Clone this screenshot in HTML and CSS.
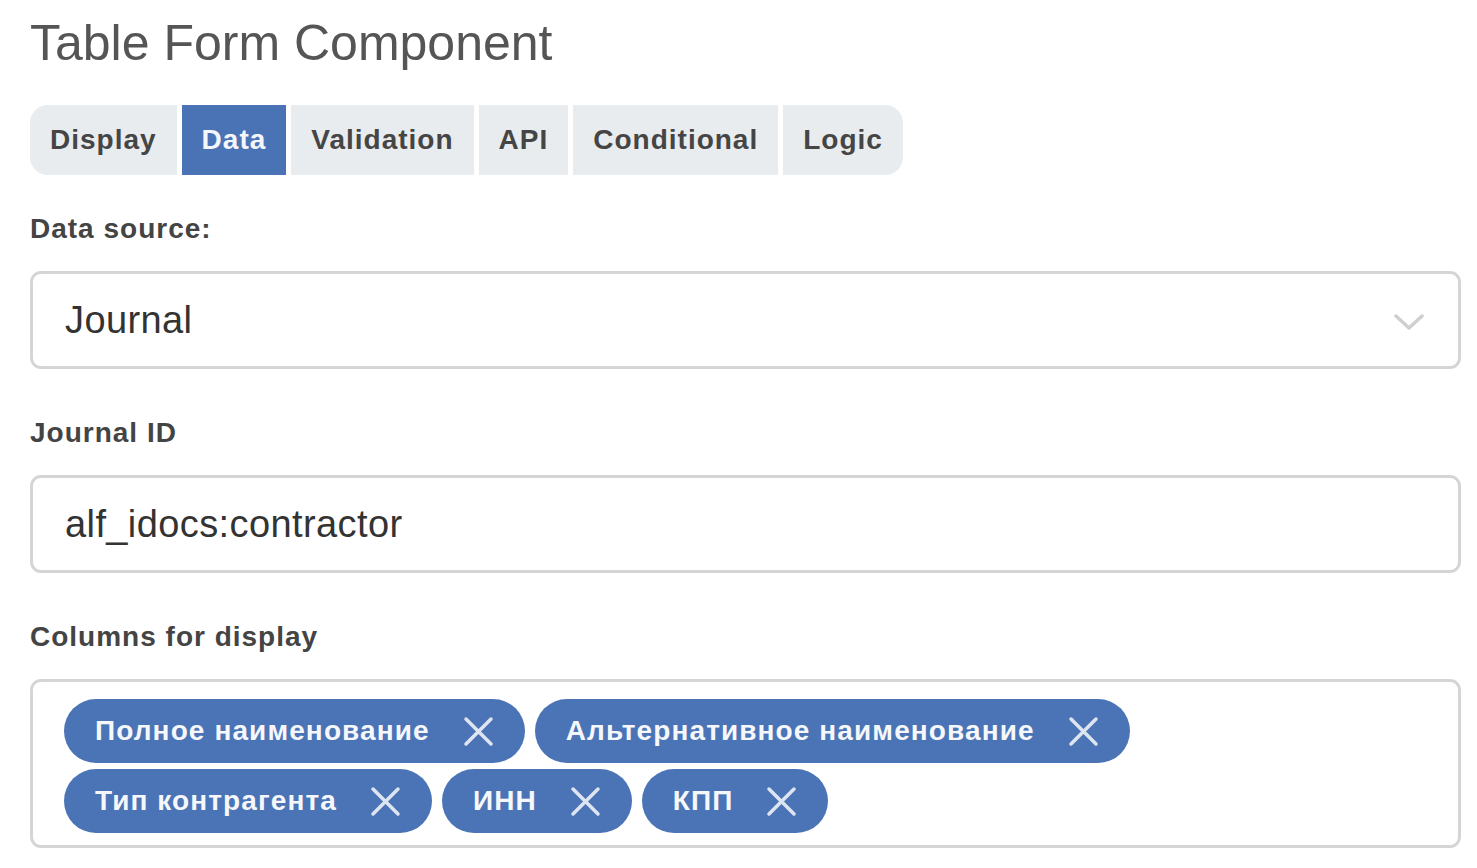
FILE: index.html
```html
<!DOCTYPE html>
<html>
<head>
<meta charset="utf-8">
<link rel="stylesheet" href="styles.css">
</head>
<body>
<div class="page">
  <h1 class="title">Table Form Component</h1>
  <div class="tabs">
    <div class="tab first">Display</div>
    <div class="tab active">Data</div>
    <div class="tab">Validation</div>
    <div class="tab">API</div>
    <div class="tab">Conditional</div>
    <div class="tab last">Logic</div>
  </div>

  <div class="field">
    <div class="label first-label">Data source:</div>
    <div class="control select">
      <span class="value">Journal</span>
      <svg class="chevron" width="30" height="18" viewBox="0 0 30 18"><path d="M2 3 L15 15 L28 3" fill="none" stroke="#cfcfcf" stroke-width="3.5" stroke-linecap="round" stroke-linejoin="round"/></svg>
    </div>
  </div>

  <div class="field">
    <div class="label">Journal ID</div>
    <div class="control">
      <span class="value">alf_idocs:contractor</span>
    </div>
  </div>

  <div class="field">
    <div class="label">Columns for display</div>
    <div class="tagbox">
      <div class="tag"><span>Полное наименование</span><svg class="x" width="31" height="31" viewBox="0 0 31 31"><path d="M3 3 L28 28 M28 3 L3 28" stroke="#dfe5f0" stroke-width="3.5" stroke-linecap="round"/></svg></div>
      <div class="tag"><span>Альтернативное наименование</span><svg class="x" width="31" height="31" viewBox="0 0 31 31"><path d="M3 3 L28 28 M28 3 L3 28" stroke="#dfe5f0" stroke-width="3.5" stroke-linecap="round"/></svg></div>
      <div class="tag"><span>Тип контрагента</span><svg class="x" width="31" height="31" viewBox="0 0 31 31"><path d="M3 3 L28 28 M28 3 L3 28" stroke="#dfe5f0" stroke-width="3.5" stroke-linecap="round"/></svg></div>
      <div class="tag"><span>ИНН</span><svg class="x" width="31" height="31" viewBox="0 0 31 31"><path d="M3 3 L28 28 M28 3 L3 28" stroke="#dfe5f0" stroke-width="3.5" stroke-linecap="round"/></svg></div>
      <div class="tag"><span>КПП</span><svg class="x" width="31" height="31" viewBox="0 0 31 31"><path d="M3 3 L28 28 M28 3 L3 28" stroke="#dfe5f0" stroke-width="3.5" stroke-linecap="round"/></svg></div>
    </div>
  </div>
</div>
</body>
</html>
```

FILE: styles.css
```css
html, body {
  margin: 0;
  padding: 0;
  background: #ffffff;
}

body {
  font-family: "Liberation Sans", Arial, sans-serif;
  color: #444;
}

.page {
  padding: 12px 16px 0 30px;
  display: flex;
  flex-direction: column;
}

.title {
  margin: 0;
  font-size: 50px;
  font-weight: normal;
  line-height: 62px;
  color: #555;
}

.tabs {
  margin-top: 31px;
  display: flex;
  gap: 5px;
  align-self: flex-start;
}

.tab {
  height: 70px;
  display: flex;
  align-items: center;
  padding: 0 20px;
  background: #e8ecee;
  font-size: 28px;
  font-weight: bold;
  letter-spacing: 1px;
  color: #454545;
}

.tab.first {
  border-radius: 18px 0 0 18px;
}

.tab.last {
  border-radius: 0 18px 18px 0;
}

.tab.active {
  background: #4a73b6;
  color: #f4f6fa;
}

.field {
  display: flex;
  flex-direction: column;
}

.label {
  margin-top: 48px;
  font-size: 28px;
  font-weight: bold;
  letter-spacing: 1px;
  line-height: 32px;
  color: #444;
  margin-bottom: 26px;
}

.label.first-label {
  margin-top: 38px;
  margin-bottom: 26px;
}

.control {
  height: 92px;
  border: 3px solid #d5d5d5;
  border-radius: 11px;
  display: flex;
  align-items: center;
  padding: 0 32px;
  justify-content: space-between;
}

.value {
  font-size: 38px;
  letter-spacing: 0.4px;
  color: #333;
}

.chevron {
  margin-right: 2px;
  margin-top: 4px;
}

.tagbox {
  border: 3px solid #d5d5d5;
  border-radius: 11px;
  padding: 17px 32px 12px 31px;
  display: flex;
  flex-wrap: wrap;
  column-gap: 10px;
  row-gap: 6px;
}

.tag {
  height: 64px;
  border-radius: 32px;
  background: #4a74b6;
  display: flex;
  align-items: center;
  padding: 0 31px 0 31px;
  gap: 33px;
  color: #f5f7fb;
  font-size: 28px;
  font-weight: bold;
  letter-spacing: 1.1px;
}

.x {
  display: block;
}
```
